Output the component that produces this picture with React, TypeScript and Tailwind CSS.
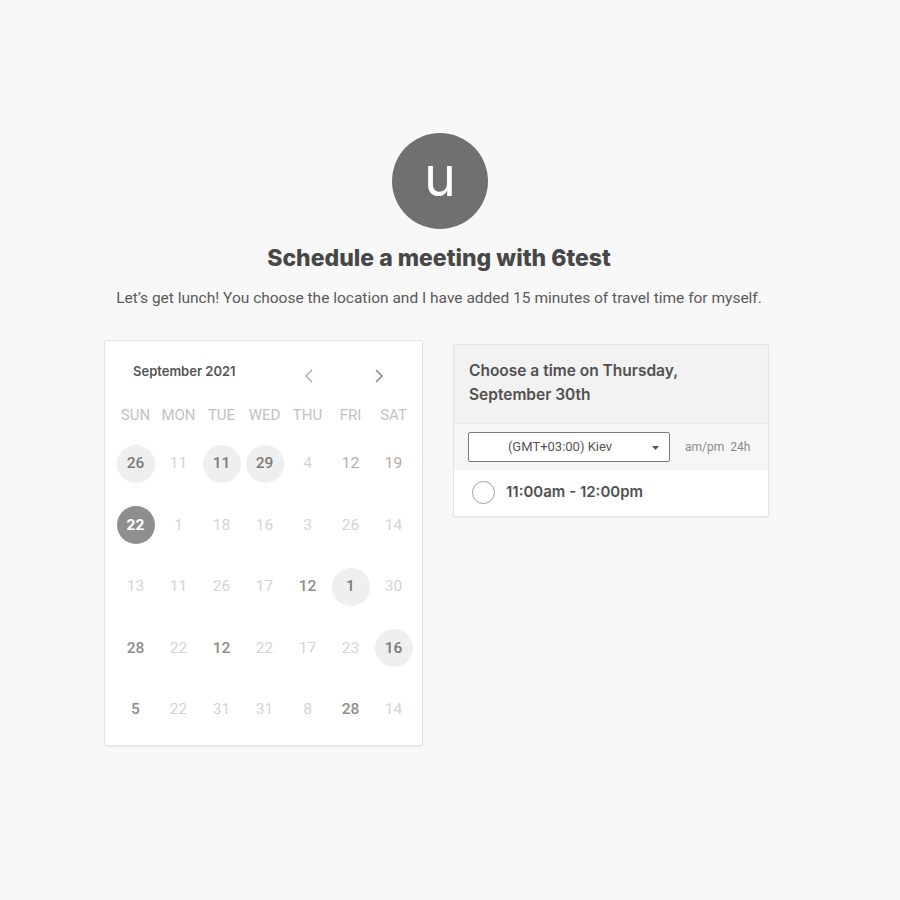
import React from "react";

type Day = { n: number; s: "circle" | "sel" | "light" | "mid" | "bold" };

const rows: Day[][] = [
  [
    { n: 26, s: "circle" },
    { n: 11, s: "light" },
    { n: 11, s: "circle" },
    { n: 29, s: "circle" },
    { n: 4, s: "light" },
    { n: 12, s: "mid" },
    { n: 19, s: "mid" },
  ],
  [
    { n: 22, s: "sel" },
    { n: 1, s: "light" },
    { n: 18, s: "light" },
    { n: 16, s: "light" },
    { n: 3, s: "light" },
    { n: 26, s: "light" },
    { n: 14, s: "light" },
  ],
  [
    { n: 13, s: "light" },
    { n: 11, s: "light" },
    { n: 26, s: "light" },
    { n: 17, s: "light" },
    { n: 12, s: "bold" },
    { n: 1, s: "circle" },
    { n: 30, s: "light" },
  ],
  [
    { n: 28, s: "bold" },
    { n: 22, s: "light" },
    { n: 12, s: "bold" },
    { n: 22, s: "light" },
    { n: 17, s: "light" },
    { n: 23, s: "light" },
    { n: 16, s: "circle" },
  ],
  [
    { n: 5, s: "bold" },
    { n: 22, s: "light" },
    { n: 31, s: "light" },
    { n: 31, s: "light" },
    { n: 8, s: "light" },
    { n: 28, s: "bold" },
    { n: 14, s: "light" },
  ],
];

function DayCell({ d }: { d: Day }) {
  if (d.s === "circle") {
    return (
      <div className="flex h-[38px] w-[38px] items-center justify-center rounded-full bg-[#efefef] text-[15.5px] font-medium text-[#7a7a7a]">
        {d.n}
      </div>
    );
  }
  if (d.s === "sel") {
    return (
      <div className="flex h-[38px] w-[38px] items-center justify-center rounded-full bg-[#8e8e8e] text-[15.5px] font-bold text-white">
        {d.n}
      </div>
    );
  }
  const cls =
    d.s === "light"
      ? "text-[#d4d4d4] font-normal"
      : d.s === "mid"
      ? "text-[#adadad] font-normal"
      : "text-[#8e8e8e] font-medium";
  return <div className={`text-[15.5px] ${cls}`}>{d.n}</div>;
}

export default function App() {
  return (
    <div
      className="min-h-[900px] w-full bg-[#f8f8f8]"
      style={{ fontFamily: "Roboto, 'Liberation Sans', sans-serif" }}
    >
      <div className="flex flex-col items-center pt-[133px]">
        <div className="ml-[-20px] flex h-[96px] w-[96px] items-center justify-center rounded-full bg-[#707070]">
          <span className="mt-[-8px] text-[54px] leading-none text-white" style={{ fontFamily: "Inter, sans-serif" }}>
            u
          </span>
        </div>
        <h1
          className="ml-[-22px] mt-[15px] text-[23px] font-extrabold leading-[28px] text-[#474747]"
          style={{ fontFamily: "Inter, 'Liberation Sans', sans-serif" }}
        >
          Schedule a meeting with 6test
        </h1>
        <p className="ml-[-22px] mt-[16px] text-[15.5px] leading-[20px] text-[#5a5a5a]">
          Let’s get lunch! You choose the location and I have added 15 minutes of travel time for myself.
        </p>
      </div>

      <div className="mt-[32px] flex items-start gap-[30px] pl-[104px]">
        {/* Calendar */}
        <div className="w-[319px] rounded-[2px] border border-[#e4e4e4] bg-white pb-[4px] shadow-[0_1px_2px_rgba(0,0,0,0.06)]">
          <div className="flex h-[62px] items-center">
            <div
              className="ml-[28px] text-[13px] font-semibold text-[#555]"
              style={{ fontFamily: "Inter, 'Liberation Sans', sans-serif" }}
            >
              September 2021
            </div>
            <div className="ml-[68px] mt-[8px] flex items-center">
              <svg width="10" height="16" viewBox="0 0 10 16" fill="none">
                <path d="M8 2L2 8l6 6" stroke="#b5b5b5" strokeWidth="1.6" />
              </svg>
              <svg className="ml-[60px]" width="10" height="16" viewBox="0 0 10 16" fill="none">
                <path d="M2 2l6 6-6 6" stroke="#8a8a8a" strokeWidth="1.6" />
              </svg>
            </div>
          </div>
          <div className="grid grid-cols-[repeat(7,43px)] px-[9px]">
            {["SUN", "MON", "TUE", "WED", "THU", "FRI", "SAT"].map((w) => (
              <div key={w} className="flex h-[24px] items-center justify-center text-[15px] text-[#c2c2c2]">
                {w}
              </div>
            ))}
          </div>
          <div className="mt-[6px] px-[9px]">
            {rows.map((r, i) => (
              <div key={i} className="grid h-[61.5px] grid-cols-[repeat(7,43px)]">
                {r.map((d, j) => (
                  <div key={j} className="flex items-center justify-center">
                    <DayCell d={d} />
                  </div>
                ))}
              </div>
            ))}
          </div>
        </div>

        {/* Time panel */}
        <div className="mt-[4px] w-[316px] overflow-hidden rounded-[2px] border border-[#e4e4e4] bg-white shadow-[0_1px_2px_rgba(0,0,0,0.06)]">
          <div className="h-[79px] border-b border-[#e8e8e8] bg-[#f2f2f2] px-[15px] pt-[14px]">
            <div
              className="text-[15.5px] font-semibold leading-[24px] text-[#505050]"
              style={{ fontFamily: "Inter, 'Liberation Sans', sans-serif" }}
            >
              Choose a time on Thursday,
              <br />
              September 30th
            </div>
          </div>
          <div className="flex h-[46px] items-center bg-[#f6f6f6] pl-[14px]">
            <div className="relative flex h-[30px] w-[202px] items-center justify-center rounded-[2px] border border-[#7a7a7a] bg-white text-[13px] text-[#555]">
              <span className="ml-[-18px]">(GMT+03:00) Kiev</span>
              <svg className="absolute right-[10px] top-[13px]" width="7" height="4" viewBox="0 0 7 4">
                <path d="M0 0h7L3.5 4z" fill="#555" />
              </svg>
            </div>
            <div className="ml-[15px] text-[12px] text-[#8a8a8a]">
              am/pm<span className="ml-[6px]">24h</span>
            </div>
          </div>
          <div className="flex h-[46px] items-center pb-[2px] pl-[18px]">
            <div className="h-[23px] w-[23px] rounded-full border-[1.5px] border-[#a0a0a0]" />
            <div
              className="ml-[11px] text-[15px] font-semibold text-[#505050]"
              style={{ fontFamily: "Inter, 'Liberation Sans', sans-serif" }}
            >
              11:00am - 12:00pm
            </div>
          </div>
        </div>
      </div>
    </div>
  );
}
